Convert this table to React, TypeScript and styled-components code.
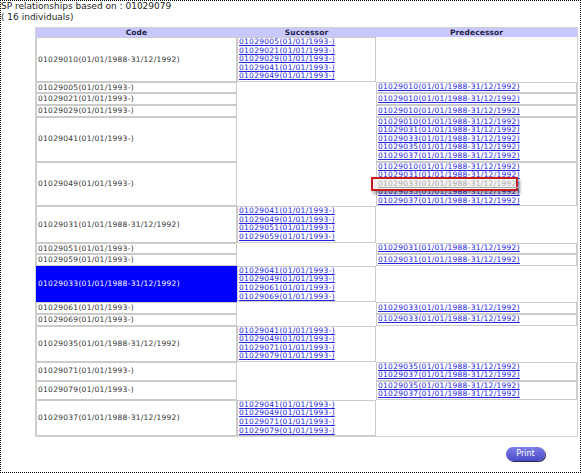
import React from 'react';
import styled, { createGlobalStyle } from 'styled-components';

const GlobalStyle = createGlobalStyle`
  html, body { margin: 0; padding: 0; background: #ffffff; }
  body { font-family: "DejaVu Sans", Verdana, sans-serif; }
`;

const Page = styled.div`
  box-sizing: border-box;
  width: 581px;
  height: 473px;
  border: 1px dotted #000;
  overflow: hidden;
  color: #222;
`;

const Title = styled.div`
  font-size: 9px;
  line-height: 11px;
  color: #262626;
  white-space: pre;
`;

const Table = styled.table`
  margin: 4px 0 0 34px;
  width: 543px;
  border-collapse: separate;
  border-spacing: 0;
  border: 1px solid #d2d2d2;
  empty-cells: hide;
  table-layout: fixed;
  font-size: 7.5px;
  letter-spacing: 0.28px;
`;

const HeadCell = styled.th`
  background: #c8c8ff;
  color: #1e1e46;
  font-weight: bold;
  text-align: center;
  padding: 0;
  line-height: 9px;
  height: 9px;
  letter-spacing: 0.1px;
`;

const CodeCell = styled.td<{ $active?: boolean }>`
  border: 1px solid ${(p) => (p.$active ? '#0000ff' : '#cbcbcb')};
  background: ${(p) => (p.$active ? '#0000ff' : 'transparent')};
  color: ${(p) => (p.$active ? '#ffffff' : '#333333')};
  padding: 0 1px;
  line-height: 9.7px;
  vertical-align: middle;
  white-space: nowrap;
`;

const LinkCell = styled.td`
  border: 1px solid #cbcbcb;
  padding: 0 1px;
  vertical-align: middle;
  white-space: nowrap;
`;

const LinkList = styled.div`
  position: relative;
`;

const Link = styled.a`
  display: block;
  line-height: 8.55px;
  color: #2424dc;
  text-decoration: underline;
  cursor: pointer;
`;

const Ghost = styled.div<{ $line: number }>`
  position: absolute;
  top: ${(p) => p.$line * 8.55 - 3}px;
  left: -7px;
  box-sizing: border-box;
  width: 147px;
  height: 14px;
  border: 2px solid #c41c1c;
  background: #f4f4f4;
  box-shadow: 2px 3px 3px rgba(0, 0, 0, 0.35);
  padding-left: 5px;
  line-height: 10px;
  color: #a9a9a9;
  text-decoration: underline;
  white-space: nowrap;
`;

const Footer = styled.div`
  display: flex;
  justify-content: flex-end;
  padding: 10px 35px 0 0;
`;

const PrintButton = styled.button`
  width: 39px;
  height: 14px;
  padding: 0;
  border: none;
  border-radius: 7px;
  background: linear-gradient(#7c7ce8, #4c4cc6);
  box-shadow: 1px 1px 0 #2a2a50;
  color: #ffffff;
  font-family: "DejaVu Sans", Verdana, sans-serif;
  font-size: 8px;
  line-height: 14px;
  cursor: pointer;
`;

const OLD = '(01/01/1988-31/12/1992)';
const NEW = '(01/01/1993-)';

type Row = {
  code: string;
  succ: string[];
  pred: string[];
  active?: boolean;
  ghost?: number;
};

const rows: Row[] = [
  { code: '01029010' + OLD, succ: ['01029005', '01029021', '01029029', '01029041', '01029049'].map((c) => c + NEW), pred: [] },
  { code: '01029005' + NEW, succ: [], pred: ['01029010' + OLD] },
  { code: '01029021' + NEW, succ: [], pred: ['01029010' + OLD] },
  { code: '01029029' + NEW, succ: [], pred: ['01029010' + OLD] },
  { code: '01029041' + NEW, succ: [], pred: ['01029010', '01029031', '01029033', '01029035', '01029037'].map((c) => c + OLD) },
  { code: '01029049' + NEW, succ: [], pred: ['01029010', '01029031', '01029033', '01029035', '01029037'].map((c) => c + OLD), ghost: 2 },
  { code: '01029031' + OLD, succ: ['01029041', '01029049', '01029051', '01029059'].map((c) => c + NEW), pred: [] },
  { code: '01029051' + NEW, succ: [], pred: ['01029031' + OLD] },
  { code: '01029059' + NEW, succ: [], pred: ['01029031' + OLD] },
  { code: '01029033' + OLD, succ: ['01029041', '01029049', '01029061', '01029069'].map((c) => c + NEW), pred: [], active: true },
  { code: '01029061' + NEW, succ: [], pred: ['01029033' + OLD] },
  { code: '01029069' + NEW, succ: [], pred: ['01029033' + OLD] },
  { code: '01029035' + OLD, succ: ['01029041', '01029049', '01029071', '01029079'].map((c) => c + NEW), pred: [] },
  { code: '01029071' + NEW, succ: [], pred: ['01029035', '01029037'].map((c) => c + OLD) },
  { code: '01029079' + NEW, succ: [], pred: ['01029035', '01029037'].map((c) => c + OLD) },
  { code: '01029037' + OLD, succ: ['01029041', '01029049', '01029071', '01029079'].map((c) => c + NEW), pred: [] },
];

const Links: React.FC<{ items: string[]; ghost?: number }> = ({ items, ghost }) =>
  items.length === 0 ? null : (
    <LinkList>
      {items.map((t, i) => (
        <Link key={i}>{t}</Link>
      ))}
      {ghost !== undefined && <Ghost $line={ghost}>{items[ghost]}</Ghost>}
    </LinkList>
  );

export default function App() {
  return (
    <Page>
      <GlobalStyle />
      <Title>{'SP relationships based on : 01029079\n( 16 individuals)'}</Title>
      <Table>
        <colgroup>
          <col style={{ width: 201 }} />
          <col style={{ width: 139 }} />
          <col style={{ width: 201 }} />
        </colgroup>
        <thead>
          <tr>
            <HeadCell>Code</HeadCell>
            <HeadCell>Successor</HeadCell>
            <HeadCell>Predecessor</HeadCell>
          </tr>
        </thead>
        <tbody>
          {rows.map((r, i) => (
            <tr key={i}>
              <CodeCell $active={r.active}>{r.code}</CodeCell>
              {r.succ.length ? (
                <LinkCell>
                  <Links items={r.succ} />
                </LinkCell>
              ) : (
                <td />
              )}
              {r.pred.length ? (
                <LinkCell>
                  <Links items={r.pred} ghost={r.ghost} />
                </LinkCell>
              ) : (
                <td />
              )}
            </tr>
          ))}
        </tbody>
      </Table>
      <Footer>
        <PrintButton>Print</PrintButton>
      </Footer>
    </Page>
  );
}
